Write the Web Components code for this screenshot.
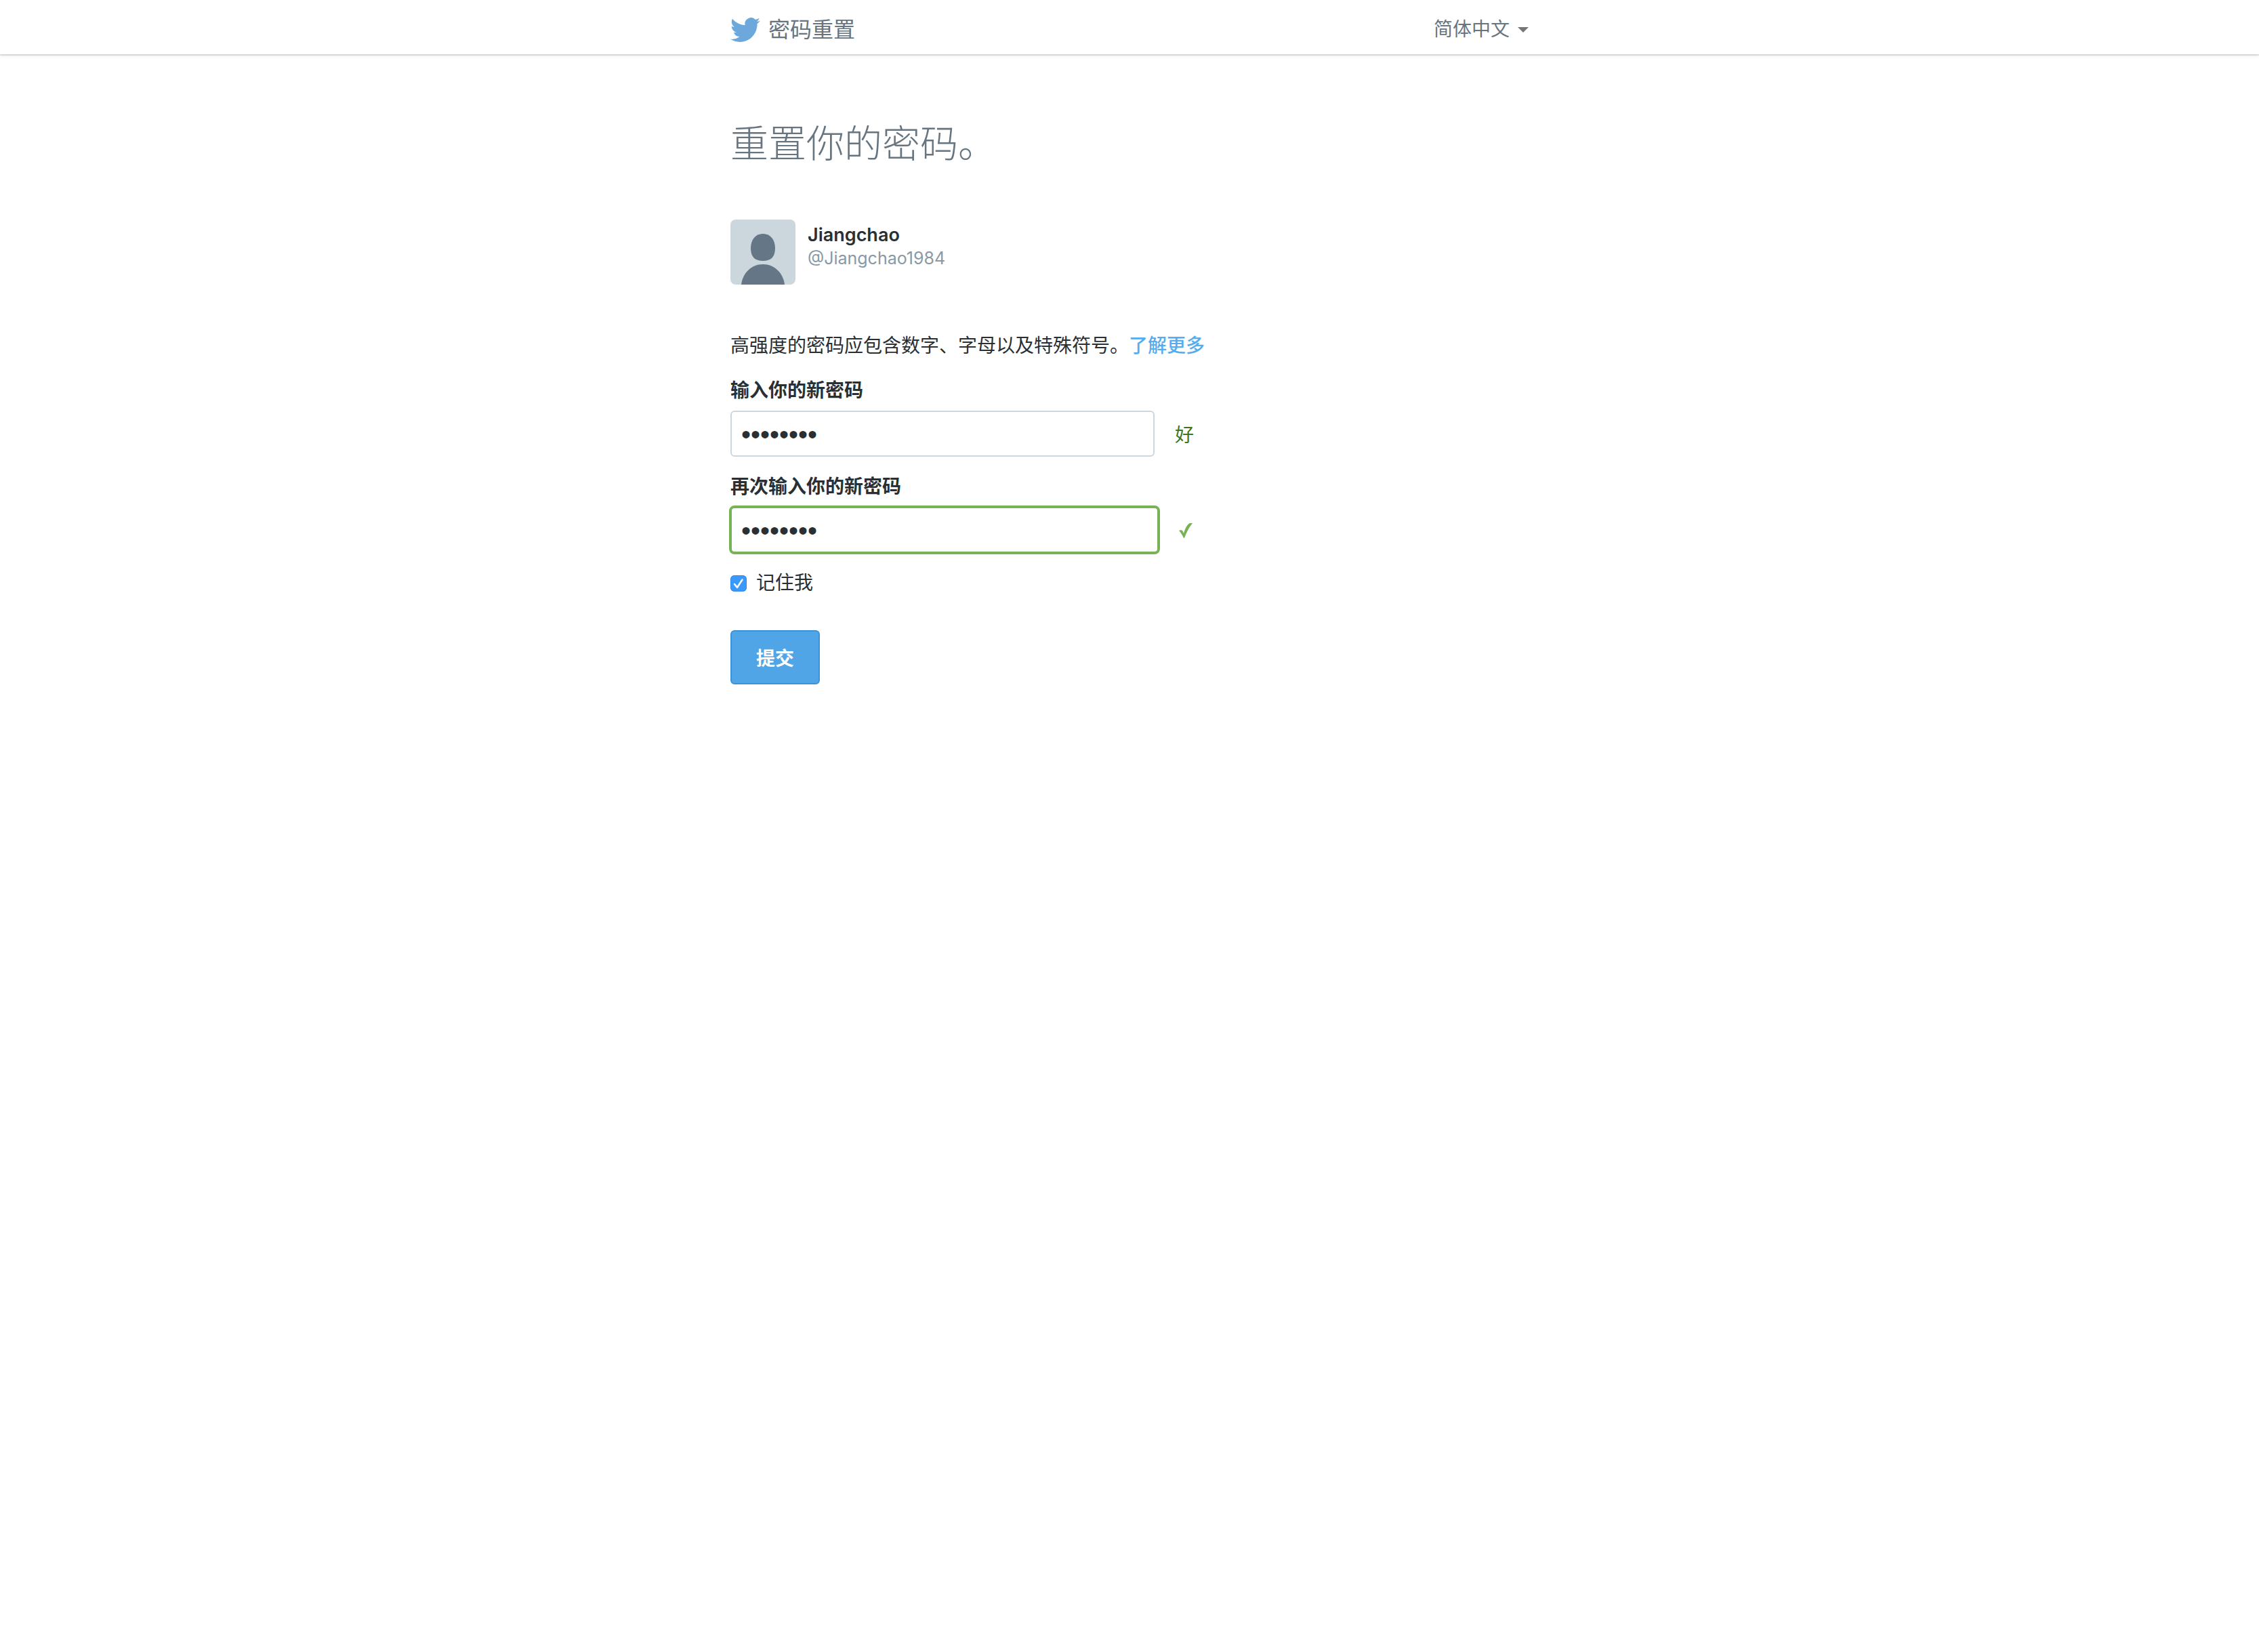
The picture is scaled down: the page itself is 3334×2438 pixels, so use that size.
<!DOCTYPE html>
<html lang="zh-CN">
<head>
<meta charset="utf-8">
<meta name="viewport" content="width=device-width, initial-scale=1">
<title>密码重置</title>
<style>
  body {
    margin: 0;
    background: #fff;
    color: #292f33;
    font-family: "Noto Sans CJK SC", sans-serif;
    font-size: 28px;
    line-height: 40px;
  }
</style>
</head>
<body>
<reset-page></reset-page>
<script>
  const define = (name, html, setup) => {
    const template = document.createElement('template');
    template.innerHTML = html;
    customElements.define(name, class extends HTMLElement {
      connectedCallback() {
        if (this.shadowRoot) return;
        this.attachShadow({ mode: 'open' }).append(template.content.cloneNode(true));
        if (setup) setup(this, this.shadowRoot);
      }
    });
  };

  define('bird-logo', `
    <style>
      :host { display: block; width: 44px; height: 36px; margin-top: 6px; }
      svg { display: block; width: 100%; height: 100%; fill: #6ca8db; }
    </style>
    <svg viewBox="0 2.2 24 19.6" aria-hidden="true"><path d="M23.953 4.57a10 10 0 01-2.825.775 4.958 4.958 0 002.163-2.723c-.951.555-2.005.959-3.127 1.184a4.92 4.92 0 00-8.384 4.482C7.69 8.095 4.067 6.13 1.64 3.162a4.822 4.822 0 00-.666 2.475c0 1.71.87 3.213 2.188 4.096a4.904 4.904 0 01-2.228-.616v.06a4.923 4.923 0 003.946 4.827 4.996 4.996 0 01-2.212.085 4.936 4.936 0 004.604 3.417 9.867 9.867 0 01-6.102 2.105c-.39 0-.779-.023-1.17-.067a13.995 13.995 0 007.557 2.209c9.053 0 13.998-7.496 13.998-13.985 0-.21 0-.42-.015-.63A9.935 9.935 0 0024 4.59z"/></svg>`);

  define('language-picker', `
    <style>
      :host { display: block; color: #66757f; }
      label { display: flex; align-items: center; gap: 12px; }
      select { appearance: none; field-sizing: content; margin: 0; padding: 0; border: 0; background: none; color: inherit; font: inherit; }
      svg { width: 16px; height: 8px; margin-top: 6px; fill: #777; }
    </style>
    <label>
      <select aria-label="语言"><option selected>简体中文</option></select>
      <svg viewBox="0 0 16 8" aria-hidden="true"><path d="M0 0h16L8 8z"/></svg>
    </label>`);

  define('top-bar', `
    <style>
      :host { display: block; background: #fff; box-shadow: 0 2px 0 rgba(0,0,0,.07), 0 2px 4px rgba(0,0,0,.12); }
      .inner { box-sizing: border-box; display: flex; align-items: center; justify-content: space-between; max-width: 1178px; height: 80px; margin: 0 auto; padding-top: 2px; }
      a { display: flex; align-items: center; gap: 12px; color: #66757f; font-size: 32px; text-decoration: none; }
    </style>
    <div class="inner">
      <a href="#"><bird-logo></bird-logo><slot></slot></a>
      <language-picker></language-picker>
    </div>`);

  define('user-card', `
    <style>
      :host { display: flex; gap: 18px; font-family: Inter, sans-serif; }
      svg { display: block; width: 96px; height: 96px; border-radius: 8px; background: #ccd6dd; fill: #657786; }
      .names { display: flex; flex-direction: column; padding-top: 5px; line-height: 35px; }
      .name { font-size: 27px; font-weight: 600; }
      .handle { color: #8899a6; font-size: 25px; }
    </style>
    <svg viewBox="0 0 96 96" aria-hidden="true">
      <path d="M48 21c11 0 18 9 18 21 0 13-6 19-18 19s-18-6-18-19c0-12 7-21 18-21z"/>
      <path d="M16 96c2-17 15-30 32-30s30 13 32 30z"/>
    </svg>
    <div class="names">
      <span class="name"><slot name="name"></slot></span>
      <span class="handle"><slot name="handle"></slot></span>
    </div>`);

  define('password-field', `
    <style>
      :host { display: flex; flex-direction: column; gap: 10px; }
      label { font-weight: 700; }
      .row { display: flex; align-items: center; height: 72px; }
      input {
        box-sizing: border-box; width: 626px; height: 68px; margin: 0 30px 0 0; padding: 2px 14px 0;
        border: 2px solid #ccd6dd; border-radius: 6px; outline: 0; background: #fff;
        color: #292f33; font: 40px "Liberation Sans", sans-serif;
      }
      :host([valid]) input { width: 636px; height: 72px; margin: 0 28px 0 -2px; border: 4px solid #77b255; border-radius: 8px; }
      .status { color: #3c7621; }
    </style>
    <label for="field"></label>
    <div class="row">
      <input id="field" type="password" value="password">
      <span class="status"><slot></slot></span>
    </div>`, (host, root) => {
    root.querySelector('label').textContent = host.getAttribute('label');
  });

  define('tick-mark', `
    <style>
      :host { display: block; width: 20px; height: 22px; margin-top: 2px; }
      svg { display: block; fill: #77b255; }
    </style>
    <svg width="20" height="22" viewBox="0 0 20 22" role="img" aria-label="匹配"><path d="M0 11c2-1 4-1 5 0l2 4C9 8 12 2 16 0h4C15 6 11 14 8 22H7C5 18 3 14 0 11z"/></svg>`);

  define('remember-me', `
    <style>
      :host { display: block; }
      label { display: flex; align-items: center; gap: 14px; }
      .box { display: grid; width: 24px; height: 24px; margin-top: 6px; }
      input, svg { grid-area: 1 / 1; width: 24px; height: 24px; margin: 0; }
      input { appearance: none; border-radius: 6px; background: #ccd6dd; }
      input:checked { background: #3b99fc; box-shadow: inset 0 0 0 1px #3089ee; }
      svg { pointer-events: none; fill: none; stroke: #fff; stroke-width: 2.5; stroke-linecap: round; stroke-linejoin: round; }
      input:not(:checked) + svg { visibility: hidden; }
    </style>
    <label>
      <span class="box"><input type="checkbox" checked><svg viewBox="0 0 24 24" aria-hidden="true"><path d="M6 13l4 5 7.5-11.5"/></svg></span>
      <slot></slot>
    </label>`);

  define('submit-button', `
    <style>
      :host { display: block; }
      button { display: block; height: 80px; margin: 0; padding: 0 36px; border: 2px solid #3b94d9; border-radius: 6px; background: #50a5e6; color: #fff; font: inherit; font-weight: 700; }
    </style>
    <button type="submit"><slot></slot></button>`);

  define('reset-page', `
    <style>
      :host { display: block; }
      main { max-width: 1178px; margin: 0 auto; padding: 92px 0; }
      h1 { margin: 0 0 80px; color: #66757f; font-size: 56px; font-weight: 300; line-height: 72px; }
      p { margin: 68px 0 0; }
      p a { color: #55acee; font-weight: 500; text-decoration: none; }
      form { display: flex; flex-direction: column; gap: 20px; margin-top: 26px; }
      submit-button { margin-top: 32px; }
    </style>
    <top-bar>密码重置</top-bar>
    <main>
      <h1>重置你的密码。</h1>
      <user-card><span slot="name">Jiangchao</span><span slot="handle">@Jiangchao1984</span></user-card>
      <p>高强度的密码应包含数字、字母以及特殊符号。<a href="#">了解更多</a></p>
      <form>
        <password-field label="输入你的新密码">好</password-field>
        <password-field label="再次输入你的新密码" valid><tick-mark></tick-mark></password-field>
        <remember-me>记住我</remember-me>
        <submit-button>提交</submit-button>
      </form>
    </main>`);
</script>
</body>
</html>
